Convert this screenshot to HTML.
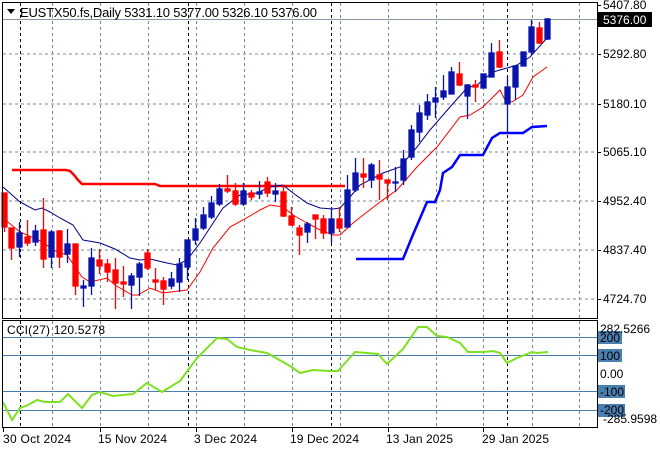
<!DOCTYPE html>
<html><head><meta charset="utf-8"><style>
html,body{margin:0;padding:0;background:#fff;width:660px;height:450px;overflow:hidden}
svg{display:block}
text{font-family:"Liberation Sans",sans-serif;font-size:12px;fill:#000}
</style></head><body>
<svg width="660" height="450" viewBox="0 0 660 450" xmlns="http://www.w3.org/2000/svg">
<g stroke="#778899" stroke-width="1" stroke-dasharray="3,3" fill="none">
<path d="M3 54H597M3 104H597M3 152H597M3 201H597M3 250H597M3 299H597"/>
<path d="M52.5 3V318M100.5 3V318M148.5 3V318M196.5 3V318M244.5 3V318M292.5 3V318M340.5 3V318M388.5 3V318M436.5 3V318M483.5 3V318M532.5 3V318M579.5 3V318"/>
<path d="M52.5 321V427M100.5 321V427M148.5 321V427M196.5 321V427M244.5 321V427M292.5 321V427M340.5 321V427M388.5 321V427M436.5 321V427M483.5 321V427M532.5 321V427M579.5 321V427"/>
</g>
<g stroke="#000" stroke-width="1" stroke-dasharray="3,3">
<path d="M20.5 3V318M188.5 3V318M331.5 3V318M507.5 3V318M20.5 321V427M188.5 321V427M331.5 321V427M507.5 321V427"/>
</g>
<path d="M3 19.5H597" stroke="#8a96a2" stroke-width="1"/>
<g stroke="#4a7fb0" stroke-width="1"><path d="M3 337.5H597M3 355.5H597M3 391.5H597M3 410.5H597"/></g>
<polyline points="12,170 66,170 70,171 74,175 78,180 82,184 155,184 160,186 345,186" fill="none" stroke="#ff0000" stroke-width="2.5"/>
<polyline points="356,259 403,259 412,237 427,202 435,202 440,190 443,173 452,167 460,155 483,155 492,138 500,133 523,133 532,127 547,126" fill="none" stroke="#0000ff" stroke-width="2.5"/>
<polyline points="3,218 20,232 43,242 53,250 67,255 82,277 90,282 107,278 115,285 132,295 138,295 150,288 163,293 187,290 200,272 213,248 230,227 243,220 260,210 270,205 283,207 293,215 307,223 320,230 333,235 340,235 353,223 380,202 397,190 417,167 437,147 460,117 470,115 483,107 500,90 505,100 512,102 523,95 533,77 547,67" fill="none" stroke="#ff0000" stroke-width="1"/>
<polyline points="3,187 20,202 35,210 42,208 50,212 60,218 73,225 83,240 100,243 115,249 130,258 140,260 150,259 167,263 177,265 187,260 200,243 223,208 240,195 257,193 270,187 283,185 293,193 307,203 320,208 333,209 340,208 350,197 360,185 383,173 400,167 417,147 430,130 450,107 467,88 477,85 493,72 507,68 517,65 530,57 547,38" fill="none" stroke="#000080" stroke-width="1"/>
<g stroke-width="1.3">
<g stroke="#ff0000" fill="#ff0000">
<path d="M4.5 193V232M11.5 228V260M27.5 220V246M43.5 198V268M59.5 230V268M75.5 244V295M99.5 249V274M107.5 259V282M115.5 258V309M123.5 266V297M147.5 249V270M155.5 268V290M163.5 277V305M227.5 175V193M235.5 183V206M251.5 190V200M267.5 177V197M283.5 185V217M291.5 207V226M299.5 225V255M315.5 215V239M323.5 215V239M339.5 207V232M363.5 158V188M379.5 160V200M387.5 180V200M459.5 62V86M475.5 80V102M499.5 40V68M539.5 22V44"/>
<rect x="2" y="193" width="5" height="34"/><rect x="9" y="228" width="5" height="20"/><rect x="25" y="237" width="5" height="6"/><rect x="41" y="230" width="5" height="29"/><rect x="57" y="231" width="5" height="26"/><rect x="73" y="244" width="5" height="42"/><rect x="97" y="260" width="5" height="6"/><rect x="105" y="264" width="5" height="8"/><rect x="113" y="270" width="5" height="13"/><rect x="121" y="282" width="5" height="2"/><rect x="145" y="253" width="5" height="15"/><rect x="153" y="280" width="5" height="2"/><rect x="161" y="281" width="5" height="8"/><rect x="225" y="189" width="5" height="2"/><rect x="233" y="191" width="5" height="13"/><rect x="249" y="193" width="5" height="4"/><rect x="265" y="182" width="5" height="11"/><rect x="281" y="192" width="5" height="24"/><rect x="289" y="216" width="5" height="9"/><rect x="297" y="228" width="5" height="7"/><rect x="313" y="215" width="5" height="4"/><rect x="321" y="219" width="5" height="14"/><rect x="337" y="219" width="5" height="9"/><rect x="361" y="174" width="5" height="3"/><rect x="377" y="175" width="5" height="4"/><rect x="385" y="180" width="5" height="3"/><rect x="457" y="74" width="5" height="11"/><rect x="473" y="85" width="5" height="2"/><rect x="497" y="52" width="5" height="15"/><rect x="537" y="28" width="5" height="15"/>
</g>
<g stroke="#0a14aa" fill="#0a14aa">
<path d="M19.5 222V257M35.5 225V246M51.5 230V268M67.5 229V263M83.5 280V307M91.5 248V295M131.5 273V309M139.5 262V296M171.5 272V289M179.5 258V292M187.5 240V280M195.5 218V245M203.5 207V230M211.5 196V219M219.5 184V206M243.5 183V206M259.5 181V199M275.5 183V202M307.5 222V243M331.5 207V243M347.5 175V228M355.5 158V192M371.5 163V188M395.5 167V192M403.5 150V185M411.5 125V160M419.5 105V142M427.5 94V120M435.5 87V118M443.5 75V100M451.5 67V94M467.5 84V119M483.5 74V88M491.5 43V77M507.5 76V133M515.5 66V100M523.5 52V66M531.5 20V55M547.5 18V40"/>
<rect x="17" y="233" width="5" height="14"/><rect x="33" y="231" width="5" height="11"/><rect x="49" y="232" width="5" height="25"/><rect x="65" y="244" width="5" height="10"/><rect x="81" y="286" width="5" height="2"/><rect x="89" y="258" width="5" height="28"/><rect x="129" y="276" width="5" height="9"/><rect x="137" y="264" width="5" height="13"/><rect x="169" y="279" width="5" height="7"/><rect x="177" y="264" width="5" height="18"/><rect x="185" y="240" width="5" height="27"/><rect x="193" y="229" width="5" height="11"/><rect x="201" y="215" width="5" height="13"/><rect x="209" y="203" width="5" height="14"/><rect x="217" y="189" width="5" height="15"/><rect x="241" y="191" width="5" height="13"/><rect x="257" y="192" width="5" height="2"/><rect x="273" y="191" width="5" height="3"/><rect x="305" y="224" width="5" height="8"/><rect x="329" y="219" width="5" height="14"/><rect x="345" y="190" width="5" height="37"/><rect x="353" y="173" width="5" height="17"/><rect x="369" y="165" width="5" height="15"/><rect x="393" y="182" width="5" height="1"/><rect x="401" y="159" width="5" height="21"/><rect x="409" y="130" width="5" height="27"/><rect x="417" y="113" width="5" height="19"/><rect x="425" y="102" width="5" height="13"/><rect x="433" y="98" width="5" height="4"/><rect x="441" y="91" width="5" height="6"/><rect x="449" y="72" width="5" height="22"/><rect x="465" y="85" width="5" height="11"/><rect x="481" y="74" width="5" height="14"/><rect x="489" y="53" width="5" height="24"/><rect x="505" y="87" width="5" height="17"/><rect x="513" y="66" width="5" height="21"/><rect x="521" y="52" width="5" height="14"/><rect x="529" y="27" width="5" height="25"/><rect x="545" y="19" width="5" height="20"/>
</g>
</g>
<polyline points="3,402 12,420 20,408 28,405 37,400 45,402 60,402 68,394 82,408 92,395 100,392 113,396 133,394 147,383 162,392 180,381 197,358 217,338 227,339 237,347 250,350 267,353 290,366 300,373 313,370 330,371 338,371 355,352 367,353 378,354 387,364 403,349 418,327 427,327 437,336 447,337 460,343 468,352 483,352 493,351 500,353 507,363 517,358 527,354 532,352 537,353 548,352" fill="none" stroke="#7fe01f" stroke-width="2"/>
<g stroke="#000" stroke-width="1" fill="none">
<rect x="2.5" y="2.5" width="595" height="316"/>
<rect x="2.5" y="320.5" width="595" height="107"/>
</g>
<g stroke="#000"><path d="M597 5.5H601M597 54.5H601M597 104.5H601M597 152.5H601M597 201.5H601M597 250.5H601M597 299.5H601M3.5 428V432M100.5 428V432M196.5 428V432M292.5 428V432M388.5 428V432M483.5 428V432"/></g>
<path d="M7 9L15 9L11 14Z" fill="#000"/>
<text x="20" y="17" style="font-size:13px" textLength="297" lengthAdjust="spacing">EUSTX50.fs,Daily  5331.10 5377.00 5326.10 5376.00</text>
<text x="7" y="334" textLength="98" lengthAdjust="spacing">CCI(27) 120.5278</text>
<text x="603" y="9">5407.80</text>
<rect x="598" y="12" width="54" height="15" fill="#000"/>
<text x="603" y="24" style="fill:#fff">5376.00</text>
<text x="603" y="58">5292.80</text>
<text x="603" y="108">5180.10</text>
<text x="603" y="156">5065.10</text>
<text x="603" y="205">4952.40</text>
<text x="603" y="254">4837.40</text>
<text x="603" y="303">4724.70</text>
<rect x="598" y="331" width="24" height="13" fill="#4a7fb0"/>
<rect x="598" y="349" width="24" height="13" fill="#4a7fb0"/>
<rect x="598" y="385" width="27" height="13" fill="#4a7fb0"/>
<rect x="598" y="404" width="27" height="13" fill="#4a7fb0"/>
<text x="600" y="333">282.5266</text>
<text x="600" y="342">200</text>
<text x="600" y="360">100</text>
<text x="600" y="378">0.00</text>
<text x="600" y="396">-100</text>
<text x="600" y="414">-200</text>
<text x="603" y="423">-285.9598</text>
<text x="3" y="443" textLength="68" lengthAdjust="spacing">30 Oct 2024</text>
<text x="98" y="443" textLength="69" lengthAdjust="spacing">15 Nov 2024</text>
<text x="194" y="443" textLength="63" lengthAdjust="spacing">3 Dec 2024</text>
<text x="290" y="443" textLength="69" lengthAdjust="spacing">19 Dec 2024</text>
<text x="386" y="443" textLength="67" lengthAdjust="spacing">13 Jan 2025</text>
<text x="482" y="443" textLength="67" lengthAdjust="spacing">29 Jan 2025</text>
</svg>
</body></html>
